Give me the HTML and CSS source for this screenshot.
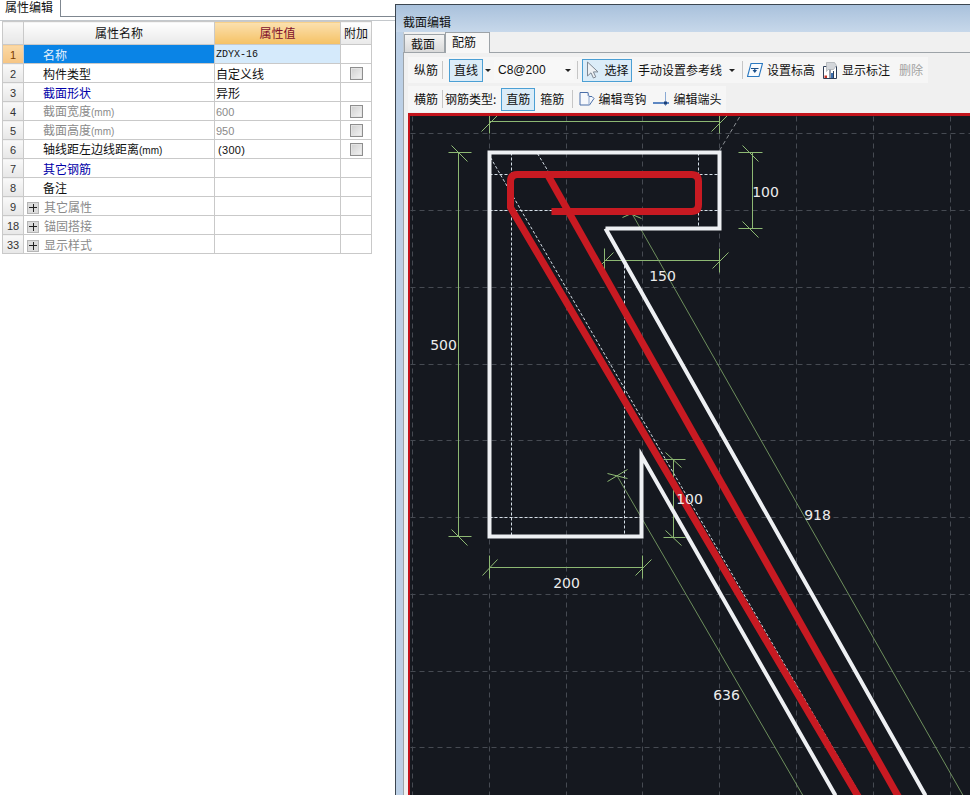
FILE: index.html
```html
<!DOCTYPE html>
<html lang="zh-CN">
<head>
<meta charset="utf-8">
<title>属性编辑</title>
<link rel="stylesheet" href="styles.css">
</head>
<body>
<div class="app">
  <section class="props">
    <div class="tabbar">
      <div class="proptab">属性编辑</div>
      <div class="tabrest"></div>
    </div>
    <div class="gridwrap">
      <table class="grid">
        <colgroup><col class="c-num"><col class="c-name"><col class="c-val"><col class="c-add"></colgroup>
        <thead>
          <tr><th class="rh"></th><th>属性名称</th><th class="hval">属性值</th><th>附加</th></tr>
        </thead>
        <tbody>
          <tr class="sel"><td class="rh">1</td><td class="nm">名称</td><td class="val mono">ZDYX-16</td><td></td></tr>
          <tr><td class="rh">2</td><td class="nm">构件类型</td><td class="val">自定义线</td><td class="ck"><span class="box"></span></td></tr>
          <tr><td class="rh">3</td><td class="nm link">截面形状</td><td class="val">异形</td><td></td></tr>
          <tr class="off"><td class="rh">4</td><td class="nm">截面宽度<span class="unit">(mm)</span></td><td class="val num">600</td><td class="ck"><span class="box"></span></td></tr>
          <tr class="off"><td class="rh">5</td><td class="nm">截面高度<span class="unit">(mm)</span></td><td class="val num">950</td><td class="ck"><span class="box"></span></td></tr>
          <tr><td class="rh">6</td><td class="nm">轴线距左边线距离<span class="unit">(mm)</span></td><td class="val num paren">(300)</td><td class="ck"><span class="box"></span></td></tr>
          <tr><td class="rh">7</td><td class="nm link">其它钢筋</td><td></td><td></td></tr>
          <tr><td class="rh">8</td><td class="nm">备注</td><td></td><td></td></tr>
          <tr class="off"><td class="rh">9</td><td class="nm grp"><span class="plus"></span>其它属性</td><td></td><td></td></tr>
          <tr class="off"><td class="rh">18</td><td class="nm grp"><span class="plus"></span>锚固搭接</td><td></td><td></td></tr>
          <tr class="off"><td class="rh">33</td><td class="nm grp"><span class="plus"></span>显示样式</td><td></td><td></td></tr>
        </tbody>
      </table>
    </div>
  </section>

  <section class="win">
    <div class="wintitle">截面编辑</div>
    <div class="tabs">
      <div class="tab">截面</div>
      <div class="tab active">配筋</div>
    </div>
    <div class="pane">
      <div class="tools">
        <div class="tb tb1">
          <span class="t">纵筋</span>
          <span class="sep m4"></span>
          <span class="btn w34 m6">直线</span>
          <span class="caret m2"></span>
          <span class="combo m3"><span class="comboval">C8@200</span><span class="caret"></span></span>
          <span class="sep m3"></span>
          <span class="btn w50 m4">
            <svg class="ico i-cur" viewBox="0 0 13 18"><path d="M1.500 1v14l3.500-3.200 2.400 5.200 2.400-1.100-2.400-5h4.600z" fill="#eef1f4" stroke="#7d8793" stroke-width="1"/></svg>选择</span>
          <span class="t m6">手动设置参考线</span>
          <span class="caret m7"></span>
          <span class="sep m7"></span>
          <svg class="ico i16 m4" viewBox="0 0 16 16"><path d="M4 1.500h11.500l-3.500 13H.5z" fill="#f8fbfe" stroke="#2a78c0" stroke-width="1.100"/><path d="M4 6.500h7.500M7.800 6.500v2.500" stroke="#1a4f8a" stroke-width="1.200" fill="none"/><path d="M5.500 8h4.600L7.800 11z" fill="#1a4f8a"/></svg>
          <span class="t m4">设置标高</span>
          <svg class="ico i14 m8" viewBox="0 0 14 17"><path d="M.5 4.500h13v12H.5z" fill="#fff" stroke="#2f3f58"/><path d="M7 4.500v12M10.500 9v7.500" stroke="#2f3f58" fill="none"/><path d="M3.500 .5h8l2 3-3 4H5l-1.500 2z" fill="#d3d6da" stroke="#a6aaaf" stroke-width=".7"/><path d="M1.500 13.500h2.500v2.500H1.500z" fill="#c8362a"/><path d="M8 11h2v5H8z" fill="#3c70b0"/></svg>
          <span class="t m5">显示标注</span>
          <span class="t dim m9">删除</span>
        </div>
        <div class="tb tb2">
          <span class="t">横筋</span>
          <span class="sep m4"></span>
          <span class="t m2">钢筋类型:</span>
          <span class="btn w34 m5">直筋</span>
          <span class="t m5">箍筋</span>
          <span class="sep m8"></span>
          <svg class="ico i16 m6" viewBox="0 0 16 16"><path d="M1 1.500h8l1 4h3l2 2-4.500 6.500H1z" fill="#f6f8fc" stroke="#4a6ea8" stroke-width="1"/><path d="M9 1.500v3.500M10 5.500v8" stroke="#8ea6cc" fill="none"/></svg>
          <span class="t m3">编辑弯钩</span>
          <svg class="ico i17 m7" viewBox="0 0 17 16"><path d="M0 12h16" stroke="#2a62b0" stroke-width="1.500" fill="none"/><path d="M12.500 1v14" stroke="#8aaad4" stroke-width="1" fill="none"/><path d="M11 10.500h3v3h-3z" fill="#1a3f78"/></svg>
          <span class="t m3">编辑端头</span>
        </div>
      </div>
      <div class="canvas">
        <svg class="draw" viewBox="409.500 115.500 560 679" preserveAspectRatio="xMinYMin slice">
          <path class="gridline" d="M410 133H970M410 210H970M410 287H970M410 364H970M410 440H970M410 517H970M410 594H970M410 671H970M410 747H970M412 116V795M489 116V795M566 116V795M642 116V795M719 116V795M796 116V795M873 116V795M950 116V795"/>
          <path class="refgrey" d="M719 150L740 115"/>
          <path class="ref" d="M511 152V536M698 152V228M624 265V536M489 174H719M489 210H719M489 517H642M490 157L860 795M537 153L549 173"/>
          <path class="dim" d="M489 121H719M489 113V133M719 113V133M481 131L497 115M711 131L727 115"/>
          <path class="dim" d="M458 152V536M448 152H471M448 536H471M451 145L467 161M451 529L467 545"/>
          <path class="dim" d="M752 152V228M738 152H762M738 228H762M742 145L758 161M742 221L758 237"/>
          <path class="dim" d="M604 260H719M604 248V272M719 248V272M597 268L613 252M712 268L728 252"/>
          <path class="dim" d="M489 567H642M489 555V578M642 555V578M482 575L497 559M635 575L651 559"/>
          <path class="dim" d="M673 459V537M663 459H685M663 537H685M665 452L681 467M665 530L681 545"/>
          <path class="dim thin" d="M632 214L970 808M617 476L810 808"/>
          <path class="dim" d="M620 209L641 218M622 217L640 209M607 473L627 478M607 481L627 469"/>
          <path class="wall" d="M605 228H719V152H489V536H641V455L835 795M605 228L925 795"/>
          <path class="rebar" d="M551 211H691Q698 211 698 204V181Q698 174 691 174H517Q510 174 510 181V207L860 800"/>
          <path class="rebar" d="M547 174L900 800"/>
          <text class="lbl" x="443" y="349">500</text>
          <text class="lbl" x="765" y="196">100</text>
          <text class="lbl" x="662" y="280">150</text>
          <text class="lbl" x="566" y="587">200</text>
          <text class="lbl" x="689" y="503">100</text>
          <text class="lbl" x="817" y="519">918</text>
          <text class="lbl" x="726" y="699">636</text>
        </svg>
      </div>
    </div>
  </section>
</div>
</body>
</html>
```

FILE: styles.css
```css
* { box-sizing: border-box; }
html, body { margin: 0; height: 100%; overflow: hidden; background: #fff; }
body { font: 12px/14px "Noto Sans CJK SC", "Liberation Sans", sans-serif; color: #111; }

.app { display: flex; width: 970px; height: 795px; overflow: hidden; }

/* left property panel */
.props { width: 395px; flex: none; }
.tabbar { display: flex; height: 21px; border-bottom: 1px solid #c4c8cc; }
.proptab { width: 61px; height: 17px; padding-left: 5px; line-height: 14px; border-right: 1px solid #7f8790; }
.tabrest { flex: 1; height: 17px; border-bottom: 1px solid #7f8790; }
.gridwrap { padding: 0 0 0 2px; }
.grid { border-collapse: collapse; table-layout: fixed; width: 369px; }
.c-num { width: 21px; }
.c-name { width: 191px; }
.c-val { width: 126px; }
.c-add { width: 31px; }
.grid th, .grid td { border: 1px solid #c9c9c9; padding: 0; height: 19px; font-weight: 400; white-space: nowrap; overflow: hidden; }
.grid td { padding-top: 1px; }
.grid th { height: 23px; background: linear-gradient(#ffffff, #e9e9e9); text-align: center; }
.grid th.hval { background: linear-gradient(#fbe1b0, #f5c163); color: #80102c; }
.grid td.rh, .grid th.rh { background: linear-gradient(#f9f9f9, #e7e7e7); text-align: center; font: 11px/14px "Liberation Sans", sans-serif; color: #333; }
.nm { padding-left: 19px !important; }
.grp { padding-left: 3px !important; line-height: 14px; }
.grp .plus { margin-right: 5px; }
.link { color: #0000a8; }
.val { padding-left: 1px !important; }
.mono { font: 10px/14px "Liberation Mono", monospace; font-weight: 700; }
.num { font: 11px/14px "Liberation Sans", sans-serif; }
.paren { padding-left: 3px !important; letter-spacing: .3px; }
.unit { font: 10px/14px "Liberation Sans", sans-serif; }
.off td { color: #8a8a8a; }
.off td.rh { color: #333; }
.sel td.rh { background: linear-gradient(#fbd9a6, #f6c583); color: #7a3b00; }
.sel .nm { background: #0a84e6; color: #e4f1fc; }
.sel .val { background: #d5eafb; color: #111; }
.ck { text-align: center; }
.box { display: block; width: 13px; height: 13px; margin: 0 auto; border: 1px solid #8e8e8e; background: linear-gradient(135deg, #cfcfcf, #f4f4f4); box-shadow: inset 0 0 0 1px #e4e4e4; }
.plus { display: inline-block; vertical-align: -2px; width: 12px; height: 12px; border: 1px solid #b5b5b5; background-color: #dcdcdc;
  background-image: linear-gradient(#222, #222), linear-gradient(#222, #222);
  background-size: 8px 1px, 1px 8px; background-position: center; background-repeat: no-repeat; }

/* right window */
.win { flex: 1; margin-top: 4px; display: flex; flex-direction: column; border: 1px solid #3c4650; border-right: 0; border-bottom: 0; background: #bcd0e6; padding-left: 7px; min-width: 0; }
.wintitle { height: 27px; padding: 10px 0 0 7px; line-height: 14px; background: linear-gradient(#a9c1dc, #c7d8ea); color: #111; margin-left: -7px; }
.tabs { display: flex; height: 20px; background: #f0f0f0; align-items: flex-end; border-left: 1px solid #c0c8d0; }
.tab { width: 41px; height: 18px; padding: 2px 0 0 6px; background: linear-gradient(#f4f4f4, #d9d9d9); border: 1px solid #9da3a8; border-bottom: 0; }
.tab.active { width: 45px; height: 21px; margin-bottom: -1px; background: #f7f7f7; position: relative; z-index: 1; }
.pane { flex: 1; display: flex; flex-direction: column; min-height: 0; background: #f0f0f0; border-top: 1px solid #9da3a8; border-left: 1px solid #9da3a8; padding: 4px 0 0 4px; }
.tools { display: flex; flex-direction: column; align-items: flex-start; gap: 3px; height: 56px; }
.tb { display: flex; align-items: center; height: 26px; padding: 0 5px 0 6px; background: #f6f6f6; }
.t { flex: none; white-space: nowrap; }
.t.dim { color: #a2a2a2; }
.sep { flex: none; width: 1px; height: 18px; background: #c6c6c6; }
.btn { flex: none; display: flex; align-items: center; justify-content: center; height: 23px; border: 1px solid #4b9fd4; background: #dbecf8; white-space: nowrap; }
.w34 { width: 34px; }
.w50 { width: 50px; }
.caret { flex: none; width: 0; height: 0; border: 3px solid transparent; border-top: 3px solid #222; border-bottom: 0; }
.combo { flex: none; width: 80px; height: 20px; display: flex; align-items: center; justify-content: space-between; padding: 0 3px 0 4px; background: #f8f8f8; }
.comboval { font: 12px/14px "Liberation Sans", sans-serif; }
.ico { flex: none; display: block; }
.i-cur { width: 13px; height: 18px; margin-right: 6px; }
.i16 { width: 16px; height: 16px; }
.i14 { width: 14px; height: 17px; }
.i17 { width: 17px; height: 16px; }
.m2 { margin-left: 2px; }
.m3 { margin-left: 3px; }
.m4 { margin-left: 4px; }
.m5 { margin-left: 5px; }
.m6 { margin-left: 6px; }
.m7 { margin-left: 7px; }
.m8 { margin-left: 8px; }
.m9 { margin-left: 9px; }

/* drawing */
.canvas { flex: 1; min-height: 0; border-top: 3px solid #c3141c; border-left: 2px solid #c3141c; background: #15181f; overflow: hidden; }
.draw { display: block; width: 100%; height: 100%; }
.draw path { fill: none; }
.gridline { stroke: #464a52; stroke-width: 1; stroke-dasharray: 5 4; }
.ref { stroke: #d5dee6; stroke-width: 1; stroke-dasharray: 3 2; }
.refgrey { stroke: #8d9196; stroke-width: 1; stroke-dasharray: 4 3; }
.dim { stroke: #8db873; stroke-width: 1; }
.dim.thin { stroke: #84ad6c; stroke-width: .8; }
.wall { stroke: #eef0f3; stroke-width: 4; stroke-linejoin: miter; }
.rebar { stroke: #c81a22; stroke-width: 7; stroke-linejoin: round; }
.lbl { fill: #ececec; font: 14px "DejaVu Sans", sans-serif; text-anchor: middle; }
```
